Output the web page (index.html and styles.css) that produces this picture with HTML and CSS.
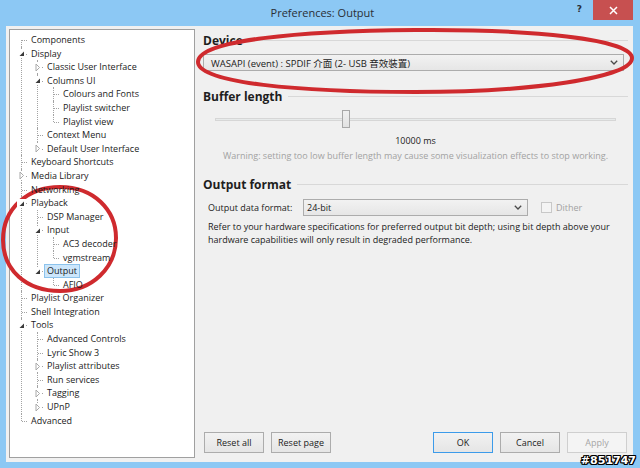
FILE: index.html
```html
<!DOCTYPE html>
<html lang="en">
<head>
    <meta charset="UTF-8">
    <meta name="viewport" content="width=device-width, initial-scale=1.0">
    <title>Preferences: Output</title>
    <link rel="stylesheet" href="styles.css">
</head>
<body>
    <div class="window">
        <div class="titlebar">
            <span class="title">Preferences: Output</span>
            <span class="help">?</span>
            <span class="close">
                <svg width="9" height="9" viewBox="0 0 9 9"><path d="M1 1L8 8M8 1L1 8" stroke="#fff" stroke-width="1.5"/></svg>
            </span>
        </div>

        <div class="client">
            <!-- left: preferences tree -->
            <div class="tree-panel">
                <ul class="tree">
                    <li><div class="row"><span class="label">Components</span></div></li>
                    <li>
                        <div class="row"><span class="tog"><svg width="9" height="9" viewBox="0 0 9 9"><path d="M7 2.5V7H2.5Z" fill="#3a3a3a"/></svg></span><span class="label">Display</span></div>
                        <ul>
                            <li><div class="row"><span class="tog"><svg width="9" height="9" viewBox="0 0 9 9"><path d="M3 1L6.5 4.5L3 8Z" fill="#fff" stroke="#a9a9a9"/></svg></span><span class="label">Classic User Interface</span></div></li>
                            <li>
                                <div class="row"><span class="tog"><svg width="9" height="9" viewBox="0 0 9 9"><path d="M7 2.5V7H2.5Z" fill="#3a3a3a"/></svg></span><span class="label">Columns UI</span></div>
                                <ul>
                                    <li><div class="row"><span class="label">Colours and Fonts</span></div></li>
                                    <li><div class="row"><span class="label">Playlist switcher</span></div></li>
                                    <li><div class="row"><span class="label">Playlist view</span></div></li>
                                </ul>
                            </li>
                            <li><div class="row"><span class="label">Context Menu</span></div></li>
                            <li><div class="row"><span class="tog"><svg width="9" height="9" viewBox="0 0 9 9"><path d="M3 1L6.5 4.5L3 8Z" fill="#fff" stroke="#a9a9a9"/></svg></span><span class="label">Default User Interface</span></div></li>
                        </ul>
                    </li>
                    <li><div class="row"><span class="label">Keyboard Shortcuts</span></div></li>
                    <li><div class="row"><span class="tog"><svg width="9" height="9" viewBox="0 0 9 9"><path d="M3 1L6.5 4.5L3 8Z" fill="#fff" stroke="#a9a9a9"/></svg></span><span class="label">Media Library</span></div></li>
                    <li><div class="row"><span class="label">Networking</span></div></li>
                    <li>
                        <div class="row"><span class="tog"><svg width="9" height="9" viewBox="0 0 9 9"><path d="M7 2.5V7H2.5Z" fill="#3a3a3a"/></svg></span><span class="label">Playback</span></div>
                        <ul>
                            <li><div class="row"><span class="label">DSP Manager</span></div></li>
                            <li>
                                <div class="row"><span class="tog"><svg width="9" height="9" viewBox="0 0 9 9"><path d="M7 2.5V7H2.5Z" fill="#3a3a3a"/></svg></span><span class="label">Input</span></div>
                                <ul>
                                    <li><div class="row"><span class="label">AC3 decoder</span></div></li>
                                    <li><div class="row"><span class="label">vgmstream</span></div></li>
                                </ul>
                            </li>
                            <li>
                                <div class="row"><span class="tog"><svg width="9" height="9" viewBox="0 0 9 9"><path d="M7 2.5V7H2.5Z" fill="#3a3a3a"/></svg></span><span class="label selected">Output</span></div>
                                <ul>
                                    <li><div class="row"><span class="label">AFIO</span></div></li>
                                </ul>
                            </li>
                        </ul>
                    </li>
                    <li><div class="row"><span class="label">Playlist Organizer</span></div></li>
                    <li><div class="row"><span class="label">Shell Integration</span></div></li>
                    <li>
                        <div class="row"><span class="tog"><svg width="9" height="9" viewBox="0 0 9 9"><path d="M7 2.5V7H2.5Z" fill="#3a3a3a"/></svg></span><span class="label">Tools</span></div>
                        <ul>
                            <li><div class="row"><span class="label">Advanced Controls</span></div></li>
                            <li><div class="row"><span class="label">Lyric Show 3</span></div></li>
                            <li><div class="row"><span class="tog"><svg width="9" height="9" viewBox="0 0 9 9"><path d="M3 1L6.5 4.5L3 8Z" fill="#fff" stroke="#a9a9a9"/></svg></span><span class="label">Playlist attributes</span></div></li>
                            <li><div class="row"><span class="label">Run services</span></div></li>
                            <li><div class="row"><span class="tog"><svg width="9" height="9" viewBox="0 0 9 9"><path d="M3 1L6.5 4.5L3 8Z" fill="#fff" stroke="#a9a9a9"/></svg></span><span class="label">Tagging</span></div></li>
                            <li><div class="row"><span class="tog"><svg width="9" height="9" viewBox="0 0 9 9"><path d="M3 1L6.5 4.5L3 8Z" fill="#fff" stroke="#a9a9a9"/></svg></span><span class="label">UPnP</span></div></li>
                        </ul>
                    </li>
                    <li><div class="row"><span class="label">Advanced</span></div></li>
                </ul>
            </div>

            <!-- right: output page -->
            <div class="page">
                <div class="settings">
                    <div class="group-title"><span>Device</span></div>
                    <div class="combo device">
                        <span>WASAPI (event) : SPDIF 介面 (2- USB 音效裝置)</span>
                        <svg width="8" height="5" viewBox="0 0 8 5"><path d="M0.8 0.8L4 4L7.2 0.8" fill="none" stroke="#4a4a4a" stroke-width="1.3"/></svg>
                    </div>

                    <div class="group-title buffer"><span>Buffer length</span></div>
                    <div class="slider">
                        <div class="track"></div>
                        <div class="thumb" style="left: 32.6%"></div>
                    </div>
                    <div class="value">10000 ms</div>
                    <div class="warning">Warning: setting too low buffer length may cause some visualization effects to stop working.</div>

                    <div class="group-title format"><span>Output format</span></div>
                    <div class="format-row">
                        <span class="format-label">Output data format:</span>
                        <div class="combo bits">
                            <span>24-bit</span>
                            <svg width="8" height="5" viewBox="0 0 8 5"><path d="M0.8 0.8L4 4L7.2 0.8" fill="none" stroke="#4a4a4a" stroke-width="1.3"/></svg>
                        </div>
                        <span class="check"></span>
                        <span class="check-label">Dither</span>
                    </div>
                    <p class="note">Refer to your hardware specifications for preferred output bit depth; using bit depth above your<br>hardware capabilities will only result in degraded performance.</p>
                </div>

                <div class="buttons">
                    <button class="btn">Reset all</button>
                    <button class="btn">Reset page</button>
                    <span class="spacer"></span>
                    <button class="btn default">OK</button>
                    <button class="btn">Cancel</button>
                    <button class="btn" disabled>Apply</button>
                </div>
            </div>
        </div>

        <!-- hand-drawn marks over the screenshot -->
        <svg class="marks" width="640" height="468" viewBox="0 0 640 468">
            <path d="M198 62C198 40 300 31 415 30C530 29 632 39 632 58C632 78 530 92 415 92C300 92 198 83 198 62Z" fill="none" stroke="#cf2a2e" stroke-width="4"/>
            <path d="M3 240C3 208 28 187 60 187C94 187 116 210 116 238C116 268 92 291 60 291C26 291 3 270 3 240Z" fill="none" stroke="#cf2a2e" stroke-width="4"/>
        </svg>
        <div class="stamp">#851747</div>
    </div>
</body>
</html>
```

FILE: styles.css
```css
:root {
    --frame-color: #8cc8f4;
    --client-color: #f0f0f0;
    --text-color: #1b1b1b;
    --grey-text: #a2a2a2;
    --line-color: #a3a3a3;
    --control-border: #acacac;
}

* {
    box-sizing: border-box;
}

html, body {
    margin: 0;
    padding: 0;
}

body {
    width: 640px;
    height: 468px;
    overflow: hidden;
    font-family: "Open Sans", "Noto Sans CJK TC", sans-serif;
    font-size: 9px;
    color: var(--text-color);
}

.window {
    position: relative;
    width: 640px;
    height: 468px;
    display: flex;
    flex-direction: column;
    padding: 0 7px 6px 6px;
    background-color: var(--frame-color);
}

/* title bar */
.titlebar {
    height: 26px;
    display: flex;
    align-items: flex-start;
    padding-left: 62px;
}

.title {
    flex: 1;
    text-align: center;
    line-height: 26px;
    font-size: 11px;
    color: #2a2f36;
}

.help {
    margin-top: 4px;
    margin-right: 11px;
    font-family: "DejaVu Sans", sans-serif;
    font-size: 9px;
    font-weight: bold;
    color: #2a2f36;
}

.close {
    width: 40px;
    height: 20px;
    display: flex;
    align-items: center;
    justify-content: center;
    background-color: #c75050;
}

/* client area */
.client {
    flex: 1;
    display: flex;
    padding: 3px 0 4px 3px;
    background-color: var(--client-color);
}

.tree-panel {
    width: 186px;
    background-color: #fff;
    border: 1px solid #a0a0a0;
    padding-top: 3px;
    overflow: hidden;
}

.tree, .tree ul {
    list-style: none;
    margin: 0;
    padding: 0;
}

.tree ul {
    margin-left: -2px;
}

.tree li {
    position: relative;
    padding-left: 18px;
}

/* dotted tree lines */
.tree li::before {
    content: '';
    position: absolute;
    left: 11px;
    top: 0;
    bottom: 0;
    border-left: 1px dotted var(--line-color);
}

.tree > li:first-child::before {
    top: 7px;
}

.tree li:last-child::before {
    bottom: auto;
    height: 7px;
}

.tree li::after {
    content: '';
    position: absolute;
    left: 12px;
    top: 7px;
    width: 5px;
    border-top: 1px dotted var(--line-color);
}

.row {
    position: relative;
    height: 13.6px;
    display: flex;
    align-items: center;
    z-index: 1;
}

.tog {
    position: absolute;
    left: -11px;
    top: 2.5px;
    width: 9px;
    height: 9px;
    background-color: #fff;
    display: flex;
}

.label {
    display: inline-block;
    height: 13.6px;
    line-height: 11.6px;
    padding: 0 2px;
    border: 1px solid transparent;
    white-space: nowrap;
}

.label.selected {
    background-color: #cce6fb;
    border-color: #8cc3ec;
}

/* right page */
.page {
    flex: 1;
    display: flex;
    flex-direction: column;
    padding: 3px 6px 5px 8px;
}

.settings {
    margin-right: -1px;
}

.group-title {
    display: flex;
    align-items: center;
    height: 16px;
    font-size: 12px;
    font-weight: bold;
    color: #1e1e1e;
}

.group-title::after {
    content: '';
    flex: 1;
    height: 1px;
    margin-left: 6px;
    background-color: #d8d8d8;
}

.group-title.buffer {
    margin-top: 17px;
}

.group-title.format {
    margin-top: 13px;
}

.combo {
    display: flex;
    align-items: center;
    justify-content: space-between;
    height: 17px;
    padding: 0 5px 0 7px;
    border: 1px solid var(--control-border);
    background: linear-gradient(#f2f2f2, #e6e6e6);
    white-space: nowrap;
}

.combo.device {
    margin-top: 6px;
    margin-right: 4px;
    font-size: 9.5px;
}

.combo.bits {
    width: 225px;
    padding-left: 3px;
}

.slider {
    position: relative;
    height: 18px;
    margin-top: 6px;
    padding: 0 12px;
    display: flex;
    align-items: center;
}

.track {
    flex: 1;
    height: 3px;
    border: 1px solid #d6d6d6;
    background-color: #e7eaea;
}

.thumb {
    position: absolute;
    top: 0;
    width: 8px;
    height: 18px;
    border: 1px solid #a8a8a8;
    background: linear-gradient(#f0f0f0, #e2e2e2);
}

.value {
    margin-top: 6px;
    line-height: 14px;
    text-align: center;
}

.warning {
    margin-top: 1px;
    line-height: 14px;
    text-align: center;
    color: var(--grey-text);
}

.format-row {
    display: flex;
    align-items: center;
    height: 17px;
    margin-top: 7px;
}

.format-label {
    width: 100px;
    padding-left: 5px;
}

.check {
    width: 11px;
    height: 11px;
    margin-left: 13px;
    border: 1px solid #c8c8c8;
    background-color: #f4f4f4;
}

.check-label {
    margin-left: 4px;
    color: var(--grey-text);
}

.note {
    margin: 5px 0 0;
    padding-left: 5px;
    line-height: 12.5px;
    white-space: nowrap;
}

/* dialog buttons */
.buttons {
    margin-top: auto;
    display: flex;
    gap: 7px;
    padding-left: 1px;
}

.spacer {
    flex: 1;
}

.btn {
    width: 60px;
    height: 21px;
    padding: 0;
    font-family: inherit;
    font-size: 9px;
    color: var(--text-color);
    border: 1px solid var(--control-border);
    background: linear-gradient(#f2f2f2, #e5e5e5);
}

.btn.default {
    border-color: #3c9bea;
}

.btn:disabled {
    color: #a6a6a6;
    border-color: #cfcfcf;
    background: #f4f4f4;
}

/* annotations drawn on top */
.marks {
    position: absolute;
    left: 0;
    top: 0;
    pointer-events: none;
}

.stamp {
    position: absolute;
    right: 4px;
    bottom: 1px;
    font-family: "DejaVu Sans", sans-serif;
    font-size: 11px;
    font-weight: bold;
    color: #fff;
    text-shadow: -1px 0 #000, 1px 0 #000, 0 -1px #000, 0 1px #000,
                 -1px -1px #000, 1px 1px #000, -1px 1px #000, 1px -1px #000;
}
```
